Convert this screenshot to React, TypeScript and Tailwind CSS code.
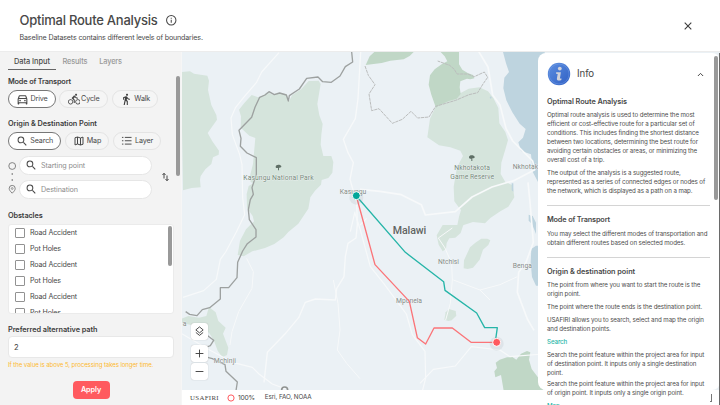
import type { ReactNode } from "react";

function InfoOutline() {
  return (
    <svg viewBox="0 0 24 24" className="size-[12.500px] fill-[#484848]">
      <path d="M11 7h2v2h-2zm0 4h2v6h-2zm1-9a10 10 0 1 0 0 20 10 10 0 0 0 0-20zm0 18a8 8 0 1 1 0-16 8 8 0 0 1 0 16z" />
    </svg>
  );
}

function CarIcon() {
  return (
    <svg viewBox="0 0 24 24" className="size-[13px] fill-[#484848]">
      <path d="M18.9 5c-.2-.6-.8-1-1.4-1h-11c-.7 0-1.200.4-1.400 1L3 11v9c0 .6.400 1 1 1h1c.6 0 1-.4 1-1v-1h12v1c0 .6.400 1 1 1h1c.6 0 1-.4 1-1v-9l-2.100-6zM6.900 6h10.300l1 3H5.800l1.100-3zM19 17H5v-5.700L5.100 11h13.800l.1.300V17z" />
      <circle cx="7.500" cy="14" r="1.500" />
      <circle cx="16.500" cy="14" r="1.500" />
    </svg>
  );
}

function CycleIcon() {
  return (
    <svg viewBox="0 0 24 24" className="size-[12.500px] fill-[#484848]">
      <path d="M15.500 5.500c1.100 0 2-.9 2-2s-.9-2-2-2-2 .9-2 2 .9 2 2 2zM5 12c-2.800 0-5 2.200-5 5s2.200 5 5 5 5-2.200 5-5-2.200-5-5-5zm0 8.500c-1.900 0-3.500-1.600-3.500-3.500s1.600-3.500 3.500-3.500 3.500 1.600 3.500 3.500-1.600 3.500-3.500 3.500zm5.800-10 2.400-2.400.8.800c1.300 1.300 3 2.100 5.100 2.100V9c-1.500 0-2.700-.6-3.600-1.500l-1.900-1.900c-.5-.4-1-.6-1.600-.6s-1.100.2-1.400.6L7.800 8.400c-.4.4-.6.9-.6 1.400 0 .6.200 1.100.6 1.400L11 14v5h2v-6.200l-2.200-2.300zM19 12c-2.800 0-5 2.200-5 5s2.200 5 5 5 5-2.200 5-5-2.200-5-5-5zm0 8.500c-1.900 0-3.500-1.600-3.500-3.500s1.600-3.500 3.500-3.500 3.500 1.600 3.500 3.500-1.600 3.500-3.500 3.500z" />
    </svg>
  );
}

function WalkIcon() {
  return (
    <svg viewBox="0 0 24 24" className="size-[12.500px] fill-[#3c3c3c]">
      <path d="M13.500 5.500c1.100 0 2-.9 2-2s-.9-2-2-2-2 .9-2 2 .9 2 2 2zM9.800 8.900 7 23h2.100l1.800-8 2.100 2v6h2v-7.500l-2.100-2 .6-3C14.800 12 16.800 13 19 13v-2c-1.900 0-3.500-1-4.300-2.400l-1-1.600c-.4-.6-1-1-1.700-1-.3 0-.5.1-.8.1L6 8.300V13h2V9.600l1.800-.7" />
    </svg>
  );
}

function SearchIcon() {
  return (
    <svg viewBox="0 0 24 24" className="size-[12.500px] shrink-0 fill-[#484848]">
      <path d="M15.500 14h-.79l-.28-.27A6.471 6.471 0 0 0 16 9.500 6.500 6.500 0 1 0 9.500 16c1.610 0 3.090-.59 4.230-1.570l.27.280v.79l5 4.990L20.490 19l-4.990-5zm-6 0C7.010 14 5 11.990 5 9.500S7.010 5 9.500 5 14 7.010 14 9.500 11.990 14 9.500 14z" />
    </svg>
  );
}

function MapIcon() {
  return (
    <svg viewBox="0 0 24 24" className="size-[12px] fill-none stroke-[#484848] stroke-2">
      <path d="M4 5.500 9 4l6 2 5-1.800v14.300L15 20l-6-2-5 1.800zM9 4v14M15 6v14" />
    </svg>
  );
}

function ListIcon() {
  return (
    <svg viewBox="0 0 24 24" className="size-[11.500px] fill-none stroke-[#484848] stroke-2">
      <path d="M2 5h3M8 5h14M2 12h3M8 12h14M2 19h3M8 19h14" />
    </svg>
  );
}

function Pill({ icon, label, active, size }: { icon: ReactNode; label: string; active?: boolean; size: string }) {
  return (
    <button
      className={`flex h-[18px] items-center justify-center rounded-full border ${size} ${
        active ? "border-[#777] bg-white" : "border-[#e4e4e4] bg-[#f5f5f5]"
      }`}
    >
      {icon}
      <span className="pt-px text-[7.200px] tracking-[-0.150px] text-[#484848]">{label}</span>
    </button>
  );
}

function Field({ placeholder }: { placeholder: string }) {
  return (
    <div className="flex h-[19px] w-[133px] items-center gap-[4px] rounded-full border border-[#e6e6e6] bg-white pl-[4.500px]">
      <SearchIcon />
      <span className="pt-[1.500px] text-[7.200px] tracking-[-0.120px] text-[#8c8c8c]">{placeholder}</span>
    </div>
  );
}

const obstacles = ["Road Accident", "Pot Holes", "Road Accident", "Pot Holes", "Road Accident", "Pot Holes"];

function Sidebar() {
  return (
    <aside className="flex w-[181px] shrink-0 justify-between bg-[#f3f3f3] pl-[8px]">
      <div className="w-[166px]">
        <nav className="flex h-[18px] text-[7.400px] font-medium leading-[20px] tracking-[-0.030px] text-[#989898]">
          <span className="w-[48px] border-b border-[#666] text-center text-[#484848]">Data Input</span>
          <span className="ml-[6.500px] tracking-[-0.160px]">Results</span>
          <span className="ml-[12px] tracking-[-0.160px]">Layers</span>
        </nav>
        <h2 className="mt-[7px] text-[7.300px] font-semibold leading-[10px] tracking-[-0.150px] text-[#3c3c3c]">
          Mode of Transport
        </h2>
        <div className="mt-[3px] flex">
          <Pill active icon={<CarIcon />} label="Drive" size="w-[47.500px] gap-[1.500px]" />
          <Pill icon={<CycleIcon />} label="Cycle" size="ml-[3.500px] w-[49px] gap-[1px]" />
          <Pill icon={<WalkIcon />} label="Walk" size="ml-[4px] w-[46px] gap-[2px]" />
        </div>
        <h2 className="mt-[11px] text-[7.300px] font-semibold leading-[10px] tracking-[-0.040px] text-[#3c3c3c]">
          Origin &amp; Destination Point
        </h2>
        <div className="mt-[3px] flex">
          <Pill active icon={<SearchIcon />} label="Search" size="w-[53px] gap-[2px]" />
          <Pill icon={<MapIcon />} label="Map" size="ml-[4px] w-[44px] gap-[2px]" />
          <Pill icon={<ListIcon />} label="Layer" size="ml-[4px] w-[48px] gap-[2.500px]" />
        </div>
        <div className="mt-[6px] flex items-center">
          <svg viewBox="0 0 9 43" className="h-[43px] w-[9px] fill-none stroke-[#777]">
            <circle cx="4.200" cy="10" r="3.400" strokeWidth="0.900" />
            <path d="M4.200 17v2M4.200 23v2" strokeWidth="1" />
            <path d="M4.200 37.200C2 35 1.200 34 1.200 32.400a3 3 0 0 1 6 0c0 1.600-.8 2.600-3 4.800z" strokeWidth="0.900" />
            <circle cx="4.200" cy="32.500" r="0.900" strokeWidth="0.700" />
          </svg>
          <div className="ml-[2px] flex flex-col gap-[5px]">
            <Field placeholder="Starting point" />
            <Field placeholder="Destination" />
          </div>
          <svg viewBox="0 0 14 20" className="ml-[9.500px] -mt-[2px] h-[10px] w-[7px] fill-none stroke-[#484848] stroke-2">
            <path d="M4 13V3M1 6l3-3.500L7 6M10 7v10M7 14l3 3.500 3-3.500" />
          </svg>
        </div>
        <h2 className="mt-[12px] text-[7.300px] font-semibold leading-[10px] tracking-[-0.100px] text-[#3c3c3c]">
          Obstacles
        </h2>
        <div className="mt-[3px] flex h-[90px] justify-between overflow-hidden rounded-[3px] border border-[#ebebeb] bg-white pr-[1px]">
          <ul className="pl-[6px]">
            {obstacles.map((name, i) => (
              <li
                key={i}
                className="flex h-[16px] items-center gap-[5.500px] text-[7.100px] tracking-[-0.140px] text-[#484848]"
              >
                <span className="size-[9.500px] rounded-[1px] border border-[#929292]" />
                {name}
              </li>
            ))}
          </ul>
          <span className="mt-px h-[40px] w-[4px] rounded-full bg-[#999]" />
        </div>
        <h2 className="mt-[11px] text-[7.300px] font-semibold leading-[10px] tracking-[-0.040px] text-[#3c3c3c]">
          Preferred alternative path
        </h2>
        <div className="mt-[1px] h-[21.500px] rounded-[4px] border border-[#e8e8e8] bg-white pl-[5px] text-[7.600px] leading-[21px] text-[#3c3c3c]">
          2
        </div>
        <p className="mt-[3px] whitespace-nowrap text-[6.100px] leading-[8px] tracking-[-0.110px] text-[#fdb92e]">
          If the value is above 5, processing takes longer time.
        </p>
        <button className="mx-auto mt-[12px] block h-[18px] w-[37px] rounded-[4px] bg-[#ff5a5f] pt-px text-[7.300px] font-semibold tracking-[-0.100px] text-white">
          Apply
        </button>
      </div>
      <span className="mr-px mt-[24px] h-[100px] w-[4px] rounded-full bg-[#999]" />
    </aside>
  );
}

const tree = "M-9-4c0-4 4-6 8-6s9 2 9 5-2 4-5 4h-2v8h-3v-7h-3c-3 0-4-2-4-4z";

function MapView() {
  return (
    <svg viewBox="6 6 1614 1014" preserveAspectRatio="xMinYMin slice" className="h-full w-full bg-[#ebf1f5]">
      {/* parks */}
      <g fill="#d5e4dc">
        <path d="M3 66 30 64l12 7 40 6 5 15-3 28 10 45 15 30 2 14-28 40 14 25 20 28-1 12-17 8-5 20-18 16-14 20-2 12 2 22-27 2-26 7z" />
        <path d="M234 142 250 136l12-10 16 8 14-6 28 4 8 20 8-16 28-19 22-24 30-1 6 10-10 60 6 34 10 26-4 32-2 30 8 34h24l6 18-3 32-12 16-20 6-2 14-18 18-14 20-6 34-30 45-30 25-14 16-28 20-28 12-38 10-26 15-18-4 7-43 18-34 24-24-4-16-17-24-1-42 6-24 14-8-8-4-3-14 10-40 7-78-18-7-26-24 1-34-6-20 16-20 22-24z" />
        <path d="M742 262l8-56 22-46 30-16 30-10 34-18 32-4 26 12 16 20 15 30 3 46 18 26 8 24-6 22-14 46-2 34 14 24 22 10 5 36-18 28-24 14-30 20-16 16-36-4-30 10-20 14 8-40 6-20-8-10-12-16-2-44 10-58 18-34-8-16-30-10-34-6z" />
        <path d="M788 525h62l-8 24-16 14-18 2-8 14-2 18-10 7-12-20-6-28z" />
        <path d="M852 631 870 592l16-14 18-12h18l9 5-6 14-16 14-10 30-20 24-16 4-12-2z" />
        <path d="M793 809l4-22 10-10 20 6 2 14-14 14-10 2z" />
        <path d="M3 807l22-9 32 5 22-5 8-27 20 16 8 26 22 20-8 18 16 42-4 22-14 7-14-20-12-32-14-22-30-18-54-12z" />
      </g>
      <g fill="#c0d7c6">
        <path d="M557 45l12-26 14-13h118l-12 12-18 10-40 4-26 7z" />
        <path d="M782 6h55v37l10 16 16 10 16 6 4 10-12 3-10-2-20 8-2 18 3 20-12 14-26 8-30 14-6 6-14-40-8-30 4-28 14-18 22-16 16-8-8-15z" />
        <path d="M963 975 946 982l-3-18 8-10-4-16 12-9 22-7 16-1 12 8 14-18 18-8 10 4-4 22 8 28 20 26 14 30v20h-96l-10-9-12-2z" />
      </g>
      {/* lake */}
      <g fill="#bed4df">
        <path d="M969 6h125v390h-20l-16-31-5-52-30-10-8-26 14-14 8-26-18-16-22-34-18-36-9-36 3-32 14-17-9-26z" />
        <path d="M1054 597l14-10h20v120h-20l-12-26-4-44zM1046 494l12 4 10 20v34l-12-30-10-10zM995 400h5v25l-5-4zM929 142l4-3 2 5-4 2z" />
      </g>
      {/* roads */}
      <g fill="none" stroke="#f7f9fa" strokeWidth="3.500" strokeLinejoin="round">
        <path d="M297 8l-52 58-16 32-38 44-24 30-14 32 4 50 22 60 7 30 2 100 6 50-25 52-32 60-16 22-12 60-38 34-62 20" />
        <path d="M542 6l-8 140-8 60-36 62 14 40 16 30-10 50 20 70 2 66-4 40-24 16-8 40-4 60-22 36-4 34-60-3-30 10-20 46-42 50-52 54-10 90" strokeWidth="4" />
        <path d="M3 850l90 52 68 36 56 14 20 20 40 30 40 15" />
        <path d="M540 418l60 6 64 10 60 30 12 31 90-10 50-44 60-30 68-20 60-32-6-26-60-60-20-38-18-70-22-30-14-84-36-60" strokeWidth="5" />
        <path d="M1044 397l6 60 10 120-22 60-22 30-4 60 30 80 20 34" strokeWidth="5" />
        <path d="M525 490l16 50 30 110 40 50 40 54 28 38 18 62 38 50 2 80-16 64" />
        <path d="M540 525l20-20M525 485l-14 60M720 1000l40-42 66-10 48-58 86 10 30 20 100-8" />
        <path d="M775 564l42-30M775 564l20 30 20 46 2 50-6 70-14 50M820 690l80 30 60-16 52-24M930 750l-30-30" strokeWidth="3" />
        <path d="M200 625l20 40-4 50-40 70-20 60-6 40M460 690l14 70 6 80-8 60 28 40 40 46" strokeWidth="3" />
      </g>
      {/* borders */}
      <g fill="none" stroke="#9da1a0" strokeWidth="4" strokeLinejoin="round">
        <path d="M515 6l3 30-22 14-16 28-26 19-26-2-14-14-34 4-22 32-30 20-3 16-6-18-20-6-16 5-16-9-12 10-16 7-14 30-10 30-38 39 6 24-2 24 20 20 28 14v50l-13 40 4 20-9 16-6 30 3 30 20 30v22l-26 20-14 22-15 34-2 46-25 30h-25v34l-32 26-22 6-16 18-22-4-12-8" />
        <path d="M83 857l18 14-10 16-10 4M83 922l14 4 38 18 3 20 34 32-4 26" />
      </g>
      <path
        d="M555 48l10 28 20 28-18 28 8 50 22-6 40 44 30-12 26-24 20 20 34-3 20-32 60-18 40-17 26-6 16-26 14-20-10-16-30 14-20-8-32 0-8-14-14-12-36-13"
        fill="none"
        stroke="#bbbdbd"
        strokeWidth="3"
        strokeDasharray="10 2"
      />
      <g transform="translate(296 354)" fill="#5f6f66"><path d={tree} /></g>
      <g transform="translate(876 326)" fill="#5f6f66"><path d={tree} /></g>
      {/* place names */}
      <g className="font-['Roboto',sans-serif]" stroke="#f4f7f8" strokeWidth="2" paintOrder="stroke" fontSize="20.500" fill="#858b89">
        <g fill="#73887a">
          <text x="190" y="391" textLength="211">Kasungu National Park</text>
          <text x="823" y="361" textLength="107">Nkhotakota</text>
          <text x="811" y="387" textLength="131">Game Reserve</text>
        </g>
        <text x="479" y="431" textLength="80">Kasungu</text>
        <text x="998" y="356" textLength="106">Nkhotakota</text>
        <text x="774" y="643" textLength="63">Ntchisi</text>
        <text x="998" y="655" textLength="58">Benga</text>
        <text x="648" y="758" textLength="78">Mponela</text>
        <text x="101" y="938" textLength="67">Mchinji</text>
        <text x="8" y="829">a</text>
        <text x="638" y="551" textLength="101" fontSize="32" className="font-medium" fill="#606463">Malawi</text>
      </g>
      <path d="M305 1020a9 9 0 0 1 18 0" fill="none" stroke="#8f9391" strokeWidth="5" />
      {/* routes */}
      <g fill="none" strokeWidth="4" strokeLinejoin="round">
        <path d="M529 438l147 169 115 88 4 26 95 68 24 44h38l-6 42" stroke="#26b5a8" />
        <path d="M529 438l56 206 103 110 24 109 25 19 25-48h55l56 43h77" stroke="#fb7478" />
      </g>
      <circle cx="950" cy="881" r="21" fill="#8a9298" opacity="0.13" />
      <circle cx="529" cy="443" r="21" fill="#8a9298" opacity="0.13" />
      <circle cx="529" cy="437" r="12" fill="#00a699" stroke="#fff" strokeWidth="3" />
      <circle cx="950" cy="877" r="12" fill="#ff5a5f" stroke="#fff" strokeWidth="3" />
    </svg>
  );
}

function MapButton({ path }: { path: string }) {
  return (
    <button className="grid size-[17px] place-items-center rounded-[3px] bg-white shadow-[0_0_1px_#0005]">
      <svg viewBox="0 0 24 24" className="size-[11px] fill-none stroke-[#3c3c3c] stroke-2">
        <path d={path} />
      </svg>
    </button>
  );
}

function Section({ title, size, children }: { title: string; size: string; children: ReactNode }) {
  return (
    <section className="border-b border-[#d4d4d4] pb-[10px]">
      <h3 className={`font-semibold leading-[9px] text-[#484848] ${size}`}>{title}</h3>
      {children}
    </section>
  );
}

function Lines({ lines, gap }: { lines: string[]; gap: string }) {
  return (
    <p className={`whitespace-nowrap text-[6.200px] leading-[9px] tracking-[-0.110px] text-[#4c4c4c] ${gap}`}>
      {lines.map((line) => (
        <span key={line} className="block">
          {line}
        </span>
      ))}
    </p>
  );
}

function InfoPanel() {
  return (
    <aside className="absolute right-0 top-[1px] flex h-[352px] w-[182px] justify-between overflow-hidden">
      <div className="absolute inset-x-0 top-0 h-[337px] rounded-[8px] bg-white" />
      <div className="relative ml-[9px] w-[163px]">
        <header className="flex h-[42px] items-center">
          <svg viewBox="0 0 24 24" className="size-[24px]">
            <defs>
              <linearGradient id="ball" x1="0" y1="0" x2="1" y2="1">
                <stop offset="0" stopColor="#5d8fe0" />
                <stop offset="1" stopColor="#2f5fc4" />
              </linearGradient>
            </defs>
            <circle cx="12" cy="12" r="11.200" fill="url(#ball)" />
            <circle cx="12" cy="12" r="10" fill="none" stroke="#7fa6e8" strokeWidth="0.400" />
            <circle cx="12.800" cy="6.600" r="1.900" fill="#d0d2da" />
            <path d="M9.200 10.300h4.700l-1 6.200 1.600.1-.2 1.400c-2 .9-4.800.9-4.400-1.500l.8-4.600-1.700-.2z" fill="#d0d2da" />
          </svg>
          <h2 className="ml-[6px] pt-px text-[9.700px] tracking-[-0.100px] text-[#484848]">Info</h2>
          <svg viewBox="0 0 24 24" className="ml-auto mr-[5px] size-[9px] fill-none stroke-[#3c3c3c] stroke-[2.500]">
            <path d="m5 16 7-7 7 7" />
          </svg>
        </header>
        <Section title="Optimal Route Analysis" size="mt-[1.500px] text-[7.300px] tracking-[-0.070px]">
          <Lines
            gap="mt-[4px]"
            lines={[
              "Optimal route analysis is used to determine the most",
              "efficient or cost-effective route for a particular set of",
              "conditions. This includes finding the shortest distance",
              "between two locations, determining the best route for",
              "avoiding certain obstacles or areas, or minimizing the",
              "overall cost of a trip.",
            ]}
          />
          <Lines
            gap="mt-[4px]"
            lines={[
              "The output of the analysis is a suggested route,",
              "represented as a series of connected edges or nodes of",
              "the network, which is displayed as a path on a map.",
            ]}
          />
        </Section>
        <Section title="Mode of Transport" size="pt-[9.500px] text-[7.300px] tracking-[-0.150px]">
          <Lines
            gap="mt-[4.500px]"
            lines={["You may select the different modes of transportation and", "obtain different routes based on selected modes."]}
          />
        </Section>
        <Section title="Origin &amp; destination point" size="pt-[9px] text-[7.300px] tracking-[-0.040px]">
          <Lines gap="mt-[4px]" lines={["The point from where you want to start the route is the", "origin point."]} />
          <Lines gap="mt-[4px]" lines={["The point where the route ends is the destination point."]} />
          <Lines gap="mt-[4px]" lines={["USAFIRI allows you to search, select and map the origin", "and destination points."]} />
          <h4 className="mt-[4px] text-[6.200px] font-medium leading-[9px] tracking-[-0.110px] text-[#1db5a6]">Search</h4>
          <Lines
            gap="mt-[4px]"
            lines={["Search the point feature within the project area for input", "of destination point. It inputs only a single destination", "point."]}
          />
          <Lines
            gap="mt-[2px]"
            lines={["Search the point feature within the project area for input", "of origin point. It inputs only a single origin point."]}
          />
          <h4 className="mt-[4px] text-[6.200px] font-medium leading-[9px] tracking-[-0.110px] text-[#1db5a6]">Map</h4>
        </Section>
      </div>
      <div className="relative flex gap-px">
        <span className="mt-[3px] h-[144px] w-[4px] rounded-full bg-[#999]" />
        <span className="w-px bg-[#6a6a6a]" />
      </div>
      <span className="absolute bottom-[3px] right-[8px] h-[8px] w-[2px] border-b border-r border-[#777]" />
    </aside>
  );
}

export default function App() {
  return (
    <div className="flex h-[405px] w-[720px] flex-col overflow-hidden bg-white font-['Inter','Liberation_Sans',sans-serif]">
      <header className="flex h-[51px] shrink-0 items-center justify-between pl-[19.500px] pr-[27px]">
        <div className="pt-[3px]">
          <div className="flex items-center gap-[8px]">
            <h1 className="text-[13px] font-medium leading-[17px] tracking-[-0.240px] text-[#484848]">
              Optimal Route Analysis
            </h1>
            <InfoOutline />
          </div>
          <p className="mt-[4px] text-[7.100px] leading-[10px] tracking-[-0.150px] text-[#484848]">
            Baseline Datasets contains different levels of boundaries.
          </p>
        </div>
        <svg viewBox="0 0 10 10" className="mt-[1px] size-[10px] fill-none stroke-[#3c3c3c]">
          <path d="m1.700 1.700 6.600 6.600m0-6.600-6.600 6.600" strokeWidth="1.100" />
        </svg>
      </header>
      <main className="flex min-h-0 flex-1 border-t border-[#ececec]">
        <Sidebar />
        <div className="relative flex min-w-0 flex-1 flex-col border-l border-[#f6f6f6]">
          <div className="h-[338px]">
            <MapView />
          </div>
          <div className="absolute left-[9px] top-[271px] flex flex-col gap-px">
            <MapButton path="m12 2 8 6.500-8 6.500-8-6.500zM4 14l8 6.500 8-6.500" />
            <span className="h-[3px]" />
            <MapButton path="M12 3.500v17M3.500 12h17" />
            <MapButton path="M3.500 12h17" />
          </div>
          <footer className="flex flex-1 items-center pl-[8px] pt-px text-[#484848]">
            <span className="font-['Liberation_Serif',serif] text-[6.900px] tracking-[0.300px]">USAFIRI</span>
            <svg viewBox="0 0 8 8" className="ml-[8px] size-[8px] fill-none stroke-[#ff5a5f]">
              <circle cx="4" cy="4" r="3.100" strokeWidth="1" />
            </svg>
            <span className="ml-[3px] text-[6.700px] tracking-[-0.200px]">100%</span>
            <span className="ml-[10px] text-[6.300px] tracking-[-0.100px]">Esri, FAO, NOAA</span>
          </footer>
          <InfoPanel />
        </div>
      </main>
    </div>
  );
}
